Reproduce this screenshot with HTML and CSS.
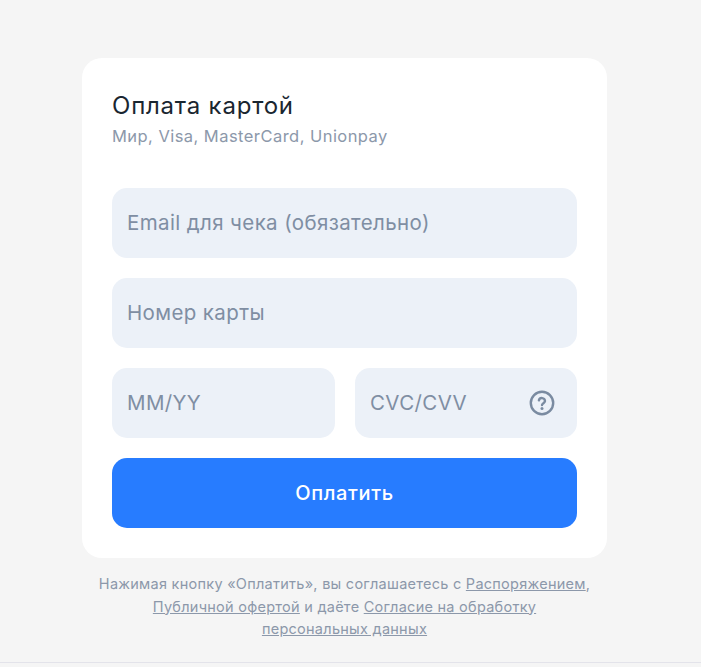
FILE: index.html
```html
<!DOCTYPE html>
<html lang="ru">
  <head>
    <meta charset="UTF-8" />
    <title>Оплата картой</title>
    <link rel="stylesheet" href="styles.css">
  </head>
  <body>
    <main class="page">
      <form class="card">
        <h1>Оплата картой</h1>
        <p class="sub">Мир, Visa, MasterCard, Unionpay</p>
        <div class="fields">
          <input class="field" placeholder="Email для чека (обязательно)">
          <input class="field" placeholder="Номер карты">
          <div class="row">
            <input class="field" placeholder="MM/YY">
            <div class="cvc">
              <input class="field" placeholder="CVC/CVV">
              <svg class="help" width="26" height="26" viewBox="0 0 26 26" fill="none">
                <circle cx="13" cy="13" r="11.2" stroke="#7a8ba1" stroke-width="2.4"/>
                <path d="M9.9 10.4a3.1 3.1 0 0 1 6.1.6c0 2-3 2.3-3 4.1" stroke="#7a8ba1" stroke-width="2.4" stroke-linecap="round"/>
                <circle cx="13" cy="18.4" r="1.5" fill="#7a8ba1"/>
              </svg>
            </div>
          </div>
          <button class="pay" type="button">Оплатить</button>
        </div>
      </form>
      <p class="terms">
        Нажимая кнопку «Оплатить», вы соглашаетесь с <a href="#">Распоряжением</a>,<br>
        <a href="#">Публичной офертой</a> и даёте <a href="#">Согласие на обработку<br>персональных данных</a>
      </p>
    </main>
    <div class="line"></div>
  </body>
</html>
```

FILE: styles.css
```css
html,
body {
  height: 100%;
}
body {
  font-family: Inter, "Noto Sans", sans-serif;
  background: #f5f5f5;
  margin: 0;
  display: flex;
  flex-direction: column;
  overflow: hidden;
}
.page {
  flex: 1;
  width: 525px;
  margin-left: 82px;
  padding-top: 58px;
}
.card {
  background: #fff;
  border-radius: 20px;
  padding: 30px;
  height: 500px;
  box-sizing: border-box;
}
h1 {
  margin: 0;
  font-size: 24px;
  font-weight: 400;
  line-height: 36px;
  letter-spacing: 0.78px;
  color: #1a2630;
}
.sub {
  margin: 0;
  font-size: 16.5px;
  line-height: 24px;
  letter-spacing: 0.45px;
  color: #8c98aa;
}
.fields {
  display: flex;
  flex-direction: column;
  gap: 20px;
  margin-top: 40px;
}
.field {
  display: block;
  width: 100%;
  height: 70px;
  box-sizing: border-box;
  border: none;
  outline: none;
  border-radius: 15px;
  background: #ecf1f8;
  padding: 0 15px 2px;
  font-family: inherit;
  font-size: 20.5px;
  letter-spacing: 0.38px;
}
.field::placeholder {
  color: #7f8ea3;
  opacity: 1;
}
.row {
  display: grid;
  grid-template-columns: 223px 222px;
  gap: 20px;
}
.cvc {
  position: relative;
}
.help {
  position: absolute;
  top: 22px;
  right: 22px;
}
.pay {
  height: 70px;
  border: none;
  border-radius: 15px;
  background: #277cff;
  color: #fff;
  font-family: inherit;
  font-size: 20px;
  font-weight: 550;
  letter-spacing: 0.62px;
  cursor: pointer;
}
.terms {
  margin: 15px 0 0;
  font-size: 14.5px;
  line-height: 22.5px;
  letter-spacing: 0.26px;
  text-align: center;
  color: #8c98aa;
}
.terms a {
  color: inherit;
}
.line {
  height: 4px;
  background: #f5f5f5;
  border-top: 1px solid #e3e3ea;
}
```
